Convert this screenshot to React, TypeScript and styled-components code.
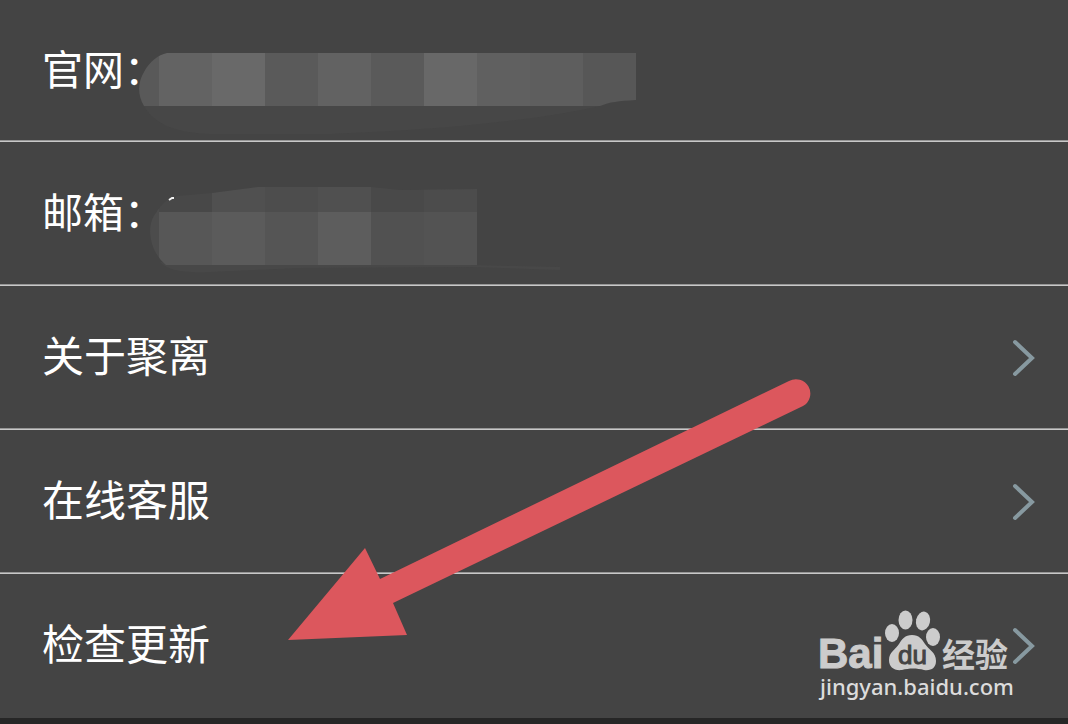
import React from "react";
import styled, { createGlobalStyle } from "styled-components";

const GlobalStyle = createGlobalStyle`
  *, *::before, *::after { box-sizing: border-box; }
  html { background: #262626; }
  body {
    margin: 0;
    background: #262626;
    font-family: "Noto Sans CJK SC", "Noto Sans", sans-serif;
  }
`;

const Page = styled.main`
  position: relative;
  min-height: 100vh;
  overflow: hidden;
  background: #262626;
`;

const List = styled.ul`
  margin: 0;
  padding: 0;
  list-style: none;
  background: #444444;
`;

const Item = styled.li`
  position: relative;
  border-bottom: 1px solid #c8c8c8;
  box-shadow: inset 0 -1px #969696;

  &:last-child {
    border-bottom-color: #444444;
    box-shadow: none;
  }
`;

const InfoRow = styled.div<{ $first?: boolean }>`
  display: flex;
  align-items: center;
  height: ${(p) => (p.$first ? 141 : 143)}px;
  padding: 0 32px 0 42px;
`;

const LinkRow = styled.button`
  display: flex;
  align-items: center;
  justify-content: space-between;
  width: 100%;
  height: 143px;
  padding: 0 32px 0 42px;
  border: 0;
  background: transparent;
  color: inherit;
  font: inherit;
  text-align: left;
  cursor: pointer;
`;

const Label = styled.span<{ $info?: boolean }>`
  color: #ffffff;
  font-size: ${(p) => (p.$info ? 41 : 42)}px;
  line-height: 60px;
  padding-bottom: 8px;
  white-space: nowrap;
`;

const Chevron = styled.svg`
  flex: none;
  width: 24px;
  height: 40px;
`;

const Redaction = styled.svg`
  position: absolute;
  top: 0;
  left: 136px;
  width: 504px;
  height: 140px;
`;

const Pointer = styled.svg`
  position: absolute;
  top: 376px;
  left: 284px;
  width: 530px;
  height: 268px;
  pointer-events: none;
`;

const Watermark = styled.div`
  position: absolute;
  top: 606px;
  right: 56px;
  width: 194px;
  color: #cccccc;
  pointer-events: none;
`;

const Logo = styled.svg`
  display: block;
  width: 194px;
  height: 68px;
  overflow: visible;
`;

const Site = styled.div`
  margin-left: 2px;
  font-family: "Noto Sans", sans-serif;
  font-size: 22px;
  font-weight: 500;
  line-height: 24px;
  color: #dcdcdc;
  white-space: nowrap;
`;

const siteCells = ["#636363", "#696969", "#5a5a5a", "#626262", "#5a5a5a", "#686868", "#606060", "#5e5e5e", "#575757"];
const mailTop = ["#484848", "#505050", "#4d4d4d", "#505050", "#494949", "#4c4c4c"];
const mailBottom = ["#575757", "#5b5b5b", "#555555", "#5d5d5d", "#515151", "#535353"];

function SiteMosaic() {
  return (
    <Redaction viewBox="136 0 504 140" aria-hidden="true">
      <clipPath id="site-clip">
        <path d="M144 106C137 94 138 82 144 72C150 61 158 55 167 53H636V100C618 101 610 102 600 106Z" />
      </clipPath>
      <path d="M144 106C154 124 176 133 210 134H330C410 131 520 124 600 106Z" fill="#474747" />
      <g clipPath="url(#site-clip)">
        <rect x="136" y="53" width="23" height="53" fill="#595959" />
        {siteCells.map((c, i) => (
          <rect key={i} x={159 + i * 53} y="53" width="53" height="53" fill={c} />
        ))}
      </g>
    </Redaction>
  );
}

function MailMosaic() {
  return (
    <Redaction viewBox="136 142 504 140" aria-hidden="true">
      <clipPath id="mail-clip">
        <path d="M166 265C150 252 145 226 156 213C161 204 169 197 178 196L212 193L258 187H371L400 190L477 189V265Z" />
      </clipPath>
      <path d="M160 262C168 270 180 273 210 272L300 268L470 267L560 270L560 267L470 265Z" fill="#484848" />
      <g clipPath="url(#mail-clip)">
        <rect x="136" y="187" width="23" height="78" fill="#4c4c4c" />
        {mailTop.map((c, i) => (
          <rect key={i} x={159 + i * 53} y="187" width="53" height="25" fill={c} />
        ))}
        {mailBottom.map((c, i) => (
          <rect key={i} x={159 + i * 53} y="212" width="53" height="53" fill={c} />
        ))}
      </g>
      <path d="M169 200L172 198L174 198" fill="none" stroke="#f2f2f2" strokeWidth="2" />
    </Redaction>
  );
}

const links = ["关于聚离", "在线客服", "检查更新"];

export default function App() {
  return (
    <>
      <GlobalStyle />
      <Page>
        <List>
          <Item>
            <InfoRow $first>
              <Label $info>官网：</Label>
            </InfoRow>
            <SiteMosaic />
          </Item>
          <Item>
            <InfoRow>
              <Label $info>邮箱：</Label>
            </InfoRow>
            <MailMosaic />
          </Item>
          {links.map((text) => (
            <Item key={text}>
              <LinkRow type="button">
                <Label>{text}</Label>
                <Chevron viewBox="0 0 24 40" aria-hidden="true">
                  <path
                    d="M3 4L20 20L3 36"
                    fill="none"
                    stroke="#8799a0"
                    strokeWidth="4"
                    strokeLinecap="round"
                    strokeLinejoin="miter"
                  />
                </Chevron>
              </LinkRow>
            </Item>
          ))}
        </List>
        <Pointer viewBox="284 376 530 268" aria-hidden="true">
          <path d="M288 640L365 548L380 579L789 381A14 14 0 0 1 803 406L393 603L407 635Z" fill="#dc575d" />
        </Pointer>
        <Watermark>
          <Logo viewBox="818 606 194 68" role="img" aria-label="Baidu 经验">
            <g fill="#cccccc">
              <text x="818" y="668" fontFamily="Liberation Sans" fontWeight="700" fontSize="42" stroke="#cccccc">
                Bai
              </text>
              <ellipse cx="892" cy="633" rx="7" ry="9" />
              <ellipse cx="905.500" cy="620" rx="7" ry="9.500" />
              <ellipse cx="923" cy="621" rx="7" ry="9.500" transform="rotate(12 923 621)" />
              <ellipse cx="933" cy="637" rx="7" ry="9" />
              <path d="M912 635C919 635 922 639 925 644C929 650 936 652 936 661C936 668 931 671 924 670C917 668 909 668 902 670C894 671 889 667 889 660C889 652 896 649 899 644C902 639 905 635 912 635Z" />
              <text x="942" y="667" fontFamily="Noto Sans CJK SC" fontWeight="700" fontSize="33">
                经验
              </text>
            </g>
            <text
              x="898"
              y="664"
              fontFamily="Liberation Sans"
              fontSize="26"
              fill="#444444"
              stroke="#444444"
            >
              du
            </text>
          </Logo>
          <Site>jingyan.baidu.com</Site>
        </Watermark>
      </Page>
    </>
  );
}
